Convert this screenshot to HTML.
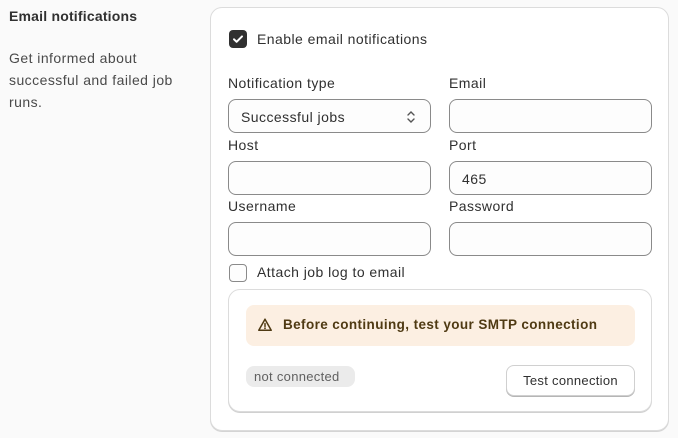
<!DOCTYPE html>
<html><head><style>
*{box-sizing:border-box;margin:0;padding:0}
body{width:678px;height:438px;background:#fafafa;font-family:"Liberation Sans",sans-serif;color:#303030;position:relative;overflow:hidden;font-size:14px;letter-spacing:0.45px}
.a{position:absolute}
.card{left:210px;top:7px;width:459px;height:424px;background:#fff;border:1px solid #dcdcdc;border-radius:12px;box-shadow:0 1px 0 #d4d4d4}
.in{position:absolute;width:203px;height:34px;border:1px solid #8a8a8a;border-radius:8px;background:#fdfdfd;font-size:14px;padding:9px 12px}
.lb{position:absolute;font-size:14px}
.cb{position:absolute;width:18px;height:18px;border-radius:4px}
</style></head><body>
<div class="a" style="left:9px;top:8px;font-weight:bold;font-size:14px;color:#303030;letter-spacing:0.2px">Email notifications</div>
<div class="a" style="left:9px;top:47px;font-size:14px;line-height:22px;width:190px;color:#4a4a4a">Get informed about successful and failed job runs.</div>
<div class="a card"></div>
<div class="cb" style="left:229px;top:30px;background:#303030"><svg width="18" height="18" viewBox="0 0 18 18"><path d="M5 9.3l2.6 2.5L13 6.4" stroke="#fff" stroke-width="2" fill="none" stroke-linecap="round" stroke-linejoin="round"/></svg></div>
<div class="lb" style="left:257px;top:31px">Enable email notifications</div>
<div class="lb" style="left:228px;top:75px">Notification type</div>
<div class="lb" style="left:449px;top:75px">Email</div>
<div class="in" style="left:228px;top:99px">Successful jobs<svg style="position:absolute;right:14px;top:9px" width="10" height="16" viewBox="0 0 10 16"><path d="M2 6l3-3 3 3M2 10l3 3 3-3" stroke="#555" stroke-width="1.4" fill="none" stroke-linecap="round"/></svg></div>
<div class="in" style="left:449px;top:99px"></div>
<div class="lb" style="left:228px;top:137px">Host</div>
<div class="lb" style="left:449px;top:137px">Port</div>
<div class="in" style="left:228px;top:161px"></div>
<div class="in" style="left:449px;top:161px">465</div>
<div class="lb" style="left:228px;top:198px">Username</div>
<div class="lb" style="left:449px;top:198px">Password</div>
<div class="in" style="left:228px;top:222px"></div>
<div class="in" style="left:449px;top:222px"></div>
<div class="cb" style="left:229px;top:264px;border:1px solid #8a8a8a;background:#fdfdfd"></div>
<div class="lb" style="left:257px;top:264px">Attach job log to email</div>
<div class="a" style="left:228px;top:289px;width:424px;height:123px;border:1px solid #dcdcdc;border-radius:12px;background:#fff;box-shadow:0 1px 0 #d0d0d0"></div>
<div class="a" style="left:246px;top:305px;width:389px;height:41px;background:#fcefe2;border-radius:8px"></div>
<svg class="a" style="left:257px;top:317px" width="16" height="16" viewBox="0 0 16 16"><path d="M8 2.2L14.2 13.3H1.8Z" stroke="#4f3a13" stroke-width="1.5" fill="none" stroke-linejoin="round"/><path d="M8 6.5v3" stroke="#4f3a13" stroke-width="1.5" stroke-linecap="round"/><circle cx="8" cy="11.3" r=".9" fill="#4f3a13"/></svg>
<div class="a" style="left:283px;top:317px;font-weight:bold;font-size:13.5px;color:#4f3a13;letter-spacing:0.4px">Before continuing, test your SMTP connection</div>
<div class="a" style="left:246px;top:366px;width:109px;height:21px;background:#ebebeb;border-radius:8px;font-size:13px;color:#616161;padding:3px 8px;letter-spacing:0.3px">not connected</div>
<div class="a" style="left:506px;top:365px;width:129px;height:31px;border:1px solid #d0d0d0;border-radius:8px;background:#fff;box-shadow:0 1px 0 #b5b5b5;font-size:13px;text-align:center;line-height:29px;color:#303030;letter-spacing:0.3px">Test connection</div>
</body></html>
